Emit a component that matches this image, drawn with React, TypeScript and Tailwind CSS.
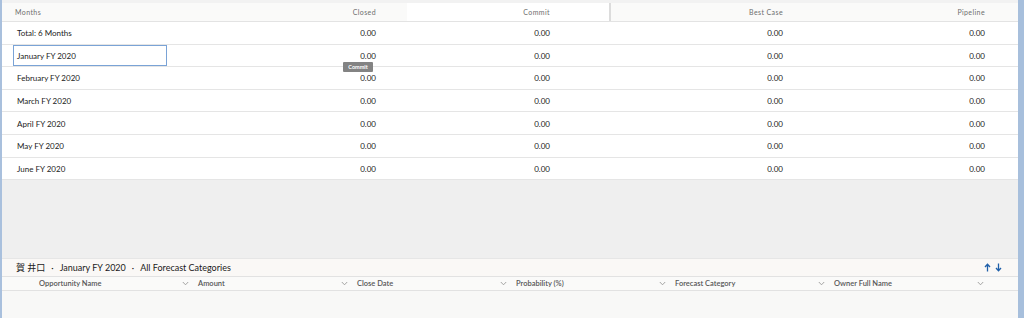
import React from "react";

const rows = [
  "Total: 6 Months",
  "January FY 2020",
  "February FY 2020",
  "March FY 2020",
  "April FY 2020",
  "May FY 2020",
  "June FY 2020",
];

const bottomCols = [
  "Opportunity Name",
  "Amount",
  "Close Date",
  "Probability (%)",
  "Forecast Category",
  "Owner Full Name",
];

function Chevron() {
  return (
    <svg width="7" height="5" viewBox="0 0 7 5" className="shrink-0">
      <path d="M0.8 1 L3.5 3.8 L6.2 1" fill="none" stroke="#9a9a9a" strokeWidth="0.9" />
    </svg>
  );
}

export default function App() {
  const grid = "grid grid-cols-[198px_207px_202px_2px_204px_203px]";
  return (
    <div
      className="flex h-[318px] w-[1024px] overflow-hidden bg-white"
      style={{ fontFamily: "Lato, 'Noto Sans', 'Noto Sans CJK JP', sans-serif" }}
    >
      <div className="w-[2px] shrink-0 bg-[#a9c0dd]" />
      <div className="flex w-[1016px] flex-col">
        <div className="h-[3px] bg-[#f2f2f2]" />
        {/* header */}
        <div className={`${grid} h-[19px] border-b border-[#e3e3e3] bg-[#fafaf9] pt-[1px] text-[7px] tracking-[0.4px] text-[#6e6e6e]`}>
          <div className="flex items-center pl-[13px]">Months</div>
          <div className="flex items-center justify-end pr-[31px]">Closed</div>
          <div className="-mt-[1px] flex items-center justify-end bg-white pr-[59px] pt-[1px]">Commit</div>
          <div className="-mt-[1px] bg-[#dcdcdc]" />
          <div className="flex items-center justify-end pr-[32px]">Best Case</div>
          <div className="flex items-center justify-end pr-[33px]">Pipeline</div>
        </div>
        {/* rows */}
        <div className="relative">
          {rows.map((r, i) => (
            <div
              key={r}
              className={`${grid} h-[22.6px] border-b border-[#e5e5e5] bg-white pt-[1px] text-[8px] text-[#222]`}
            >
              <div className="-mt-[1px] flex items-stretch pl-[11px]">
                <div
                  className={`flex w-[154px] items-center pl-[3px] pt-[1px] ${
                    i === 1 ? "border border-[#7aa3d6]" : "border border-transparent"
                  }`}
                >
                  {r}
                </div>
              </div>
              <div className="flex items-center justify-end pr-[31px]">0.00</div>
              <div className="flex items-center justify-end pr-[59px]">0.00</div>
              <div />
              <div className="flex items-center justify-end pr-[32px]">0.00</div>
              <div className="flex items-center justify-end pr-[33px]">0.00</div>
            </div>
          ))}
          <div className="absolute left-[341px] top-[40px] flex h-[10px] w-[30px] items-center justify-center rounded-[1px] bg-[#838383] text-[5.5px] font-bold text-white">
            Commit
          </div>
        </div>
        <div className="flex-1 bg-[#efefef]" />
        {/* title bar */}
        <div className="flex h-[18px] items-center justify-between border-t border-[#e6e6e6] bg-[#faf8f6] pl-[14px] pr-[16px] text-[9px] text-[#1a1a1a]">
          <div className="flex items-center gap-[6px]">
            <span>賀 井口</span>
            <span>·</span>
            <span>January FY 2020</span>
            <span>·</span>
            <span>All Forecast Categories</span>
          </div>
          <div className="flex items-center gap-[4px]">
            <svg width="7" height="9" viewBox="0 0 7 9">
              <path d="M3.5 8.5 V1.5 M1 4 L3.5 1.2 L6 4" fill="none" stroke="#1f5fa9" strokeWidth="1.3" />
            </svg>
            <svg width="7" height="9" viewBox="0 0 7 9">
              <path d="M3.5 0.5 V7.5 M1 5 L3.5 7.8 L6 5" fill="none" stroke="#1f5fa9" strokeWidth="1.3" />
            </svg>
          </div>
        </div>
        {/* bottom header */}
        <div className="flex h-[15px] border-t border-b border-[#e2e2e2] bg-[#fafaf9] pl-[29px] text-[7.5px] font-semibold text-[#555]">
          {bottomCols.map((c) => (
            <div key={c} className="flex w-[159px] items-center justify-between pl-[8px] pr-[1px]">
              <span>{c}</span>
              <Chevron />
            </div>
          ))}
        </div>
        <div className="h-[27px] bg-[#f8f8f7]" />
      </div>
      <div className="w-[6px] shrink-0 bg-[#a7bfdc]" />
    </div>
  );
}
